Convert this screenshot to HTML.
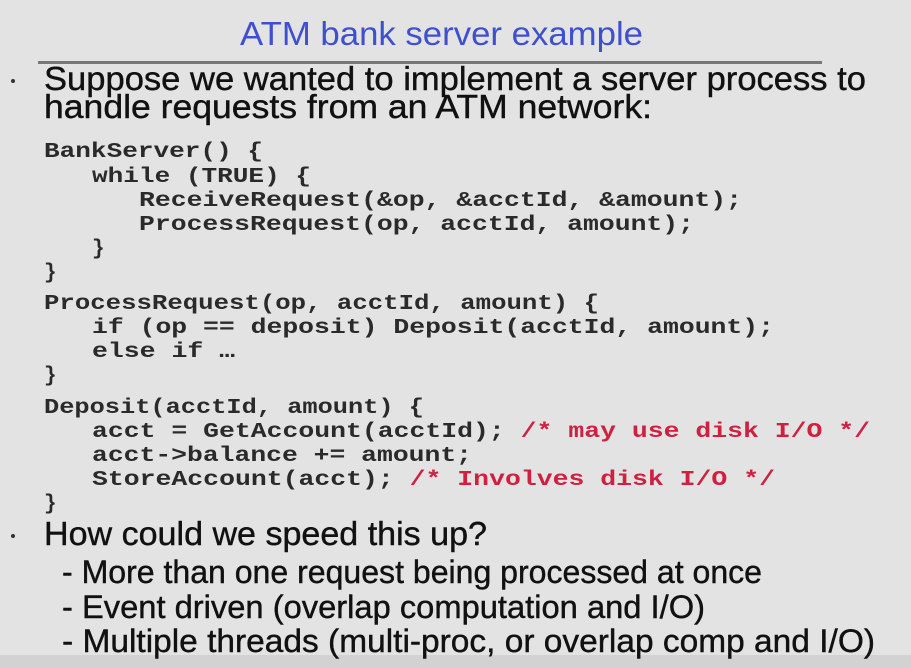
<!DOCTYPE html>
<html><head><meta charset="utf-8"><style>
html,body{margin:0;padding:0;background:#e3e3e3;}
svg{display:block}
.t{font-family:"Liberation Sans",sans-serif;font-size:33px;fill:#111;stroke:#111;stroke-width:0.4;}
.s{font-size:32px;}
.c{font-family:"Liberation Mono",monospace;font-weight:bold;font-size:21px;fill:#2a2a2a;}
.r{fill:#d0203f;}
</style></head><body>
<svg width="911" height="668" viewBox="0 0 911 668" xmlns="http://www.w3.org/2000/svg">
<rect width="911" height="668" fill="#e3e3e3"/>
<rect x="0" y="655" width="911" height="13" fill="#d2d2d2"/>
<text x="240" y="45" textLength="403" lengthAdjust="spacingAndGlyphs" font-family="Liberation Sans, sans-serif" font-size="33" fill="#3e50d0">ATM bank server example</text>
<rect x="38" y="61" width="784" height="3" fill="#777"/>
<circle cx="13" cy="81" r="2" fill="#333"/>
<text class="t" x="44" y="90" textLength="822" lengthAdjust="spacingAndGlyphs">Suppose we wanted to implement a server process to</text>
<text class="t" x="44" y="118" textLength="608" lengthAdjust="spacingAndGlyphs">handle requests from an ATM network:</text>
<text class="c" x="44" y="157" textLength="219" lengthAdjust="spacingAndGlyphs">BankServer() {</text>
<text class="c" x="92" y="182" textLength="219" lengthAdjust="spacingAndGlyphs">while (TRUE) {</text>
<text class="c" x="139" y="206" textLength="603" lengthAdjust="spacingAndGlyphs">ReceiveRequest(&amp;op, &amp;acctId, &amp;amount);</text>
<text class="c" x="139" y="230" textLength="555" lengthAdjust="spacingAndGlyphs">ProcessRequest(op, acctId, amount);</text>
<text class="c" x="92" y="254">}</text>
<text class="c" x="44" y="278">}</text>
<text class="c" x="44" y="309" textLength="555" lengthAdjust="spacingAndGlyphs">ProcessRequest(op, acctId, amount) {</text>
<text class="c" x="92" y="333" textLength="682" lengthAdjust="spacingAndGlyphs">if (op == deposit) Deposit(acctId, amount);</text>
<text class="c" x="92" y="357" textLength="143" lengthAdjust="spacingAndGlyphs">else if …</text>
<text class="c" x="44" y="381">}</text>
<text class="c" x="44" y="413" textLength="380" lengthAdjust="spacingAndGlyphs">Deposit(acctId, amount) {</text>
<text class="c" x="92" y="437" textLength="778" lengthAdjust="spacingAndGlyphs">acct = GetAccount(acctId); <tspan class="r">/* may use disk I/O */</tspan></text>
<text class="c" x="92" y="461" textLength="380" lengthAdjust="spacingAndGlyphs">acct-&gt;balance += amount;</text>
<text class="c" x="92" y="485" textLength="683" lengthAdjust="spacingAndGlyphs">StoreAccount(acct); <tspan class="r">/* Involves disk I/O */</tspan></text>
<text class="c" x="44" y="509">}</text>
<circle cx="13" cy="536" r="2" fill="#333"/>
<text class="t" x="44" y="545" textLength="443" lengthAdjust="spacingAndGlyphs">How could we speed this up?</text>
<text class="t s" x="62" y="583" textLength="700" lengthAdjust="spacingAndGlyphs">- More than one request being processed at once</text>
<text class="t s" x="62" y="618" textLength="643" lengthAdjust="spacingAndGlyphs">- Event driven (overlap computation and I/O)</text>
<text class="t s" x="62" y="652" textLength="813" lengthAdjust="spacingAndGlyphs">- Multiple threads (multi-proc, or overlap comp and I/O)</text>
</svg>
</body></html>
